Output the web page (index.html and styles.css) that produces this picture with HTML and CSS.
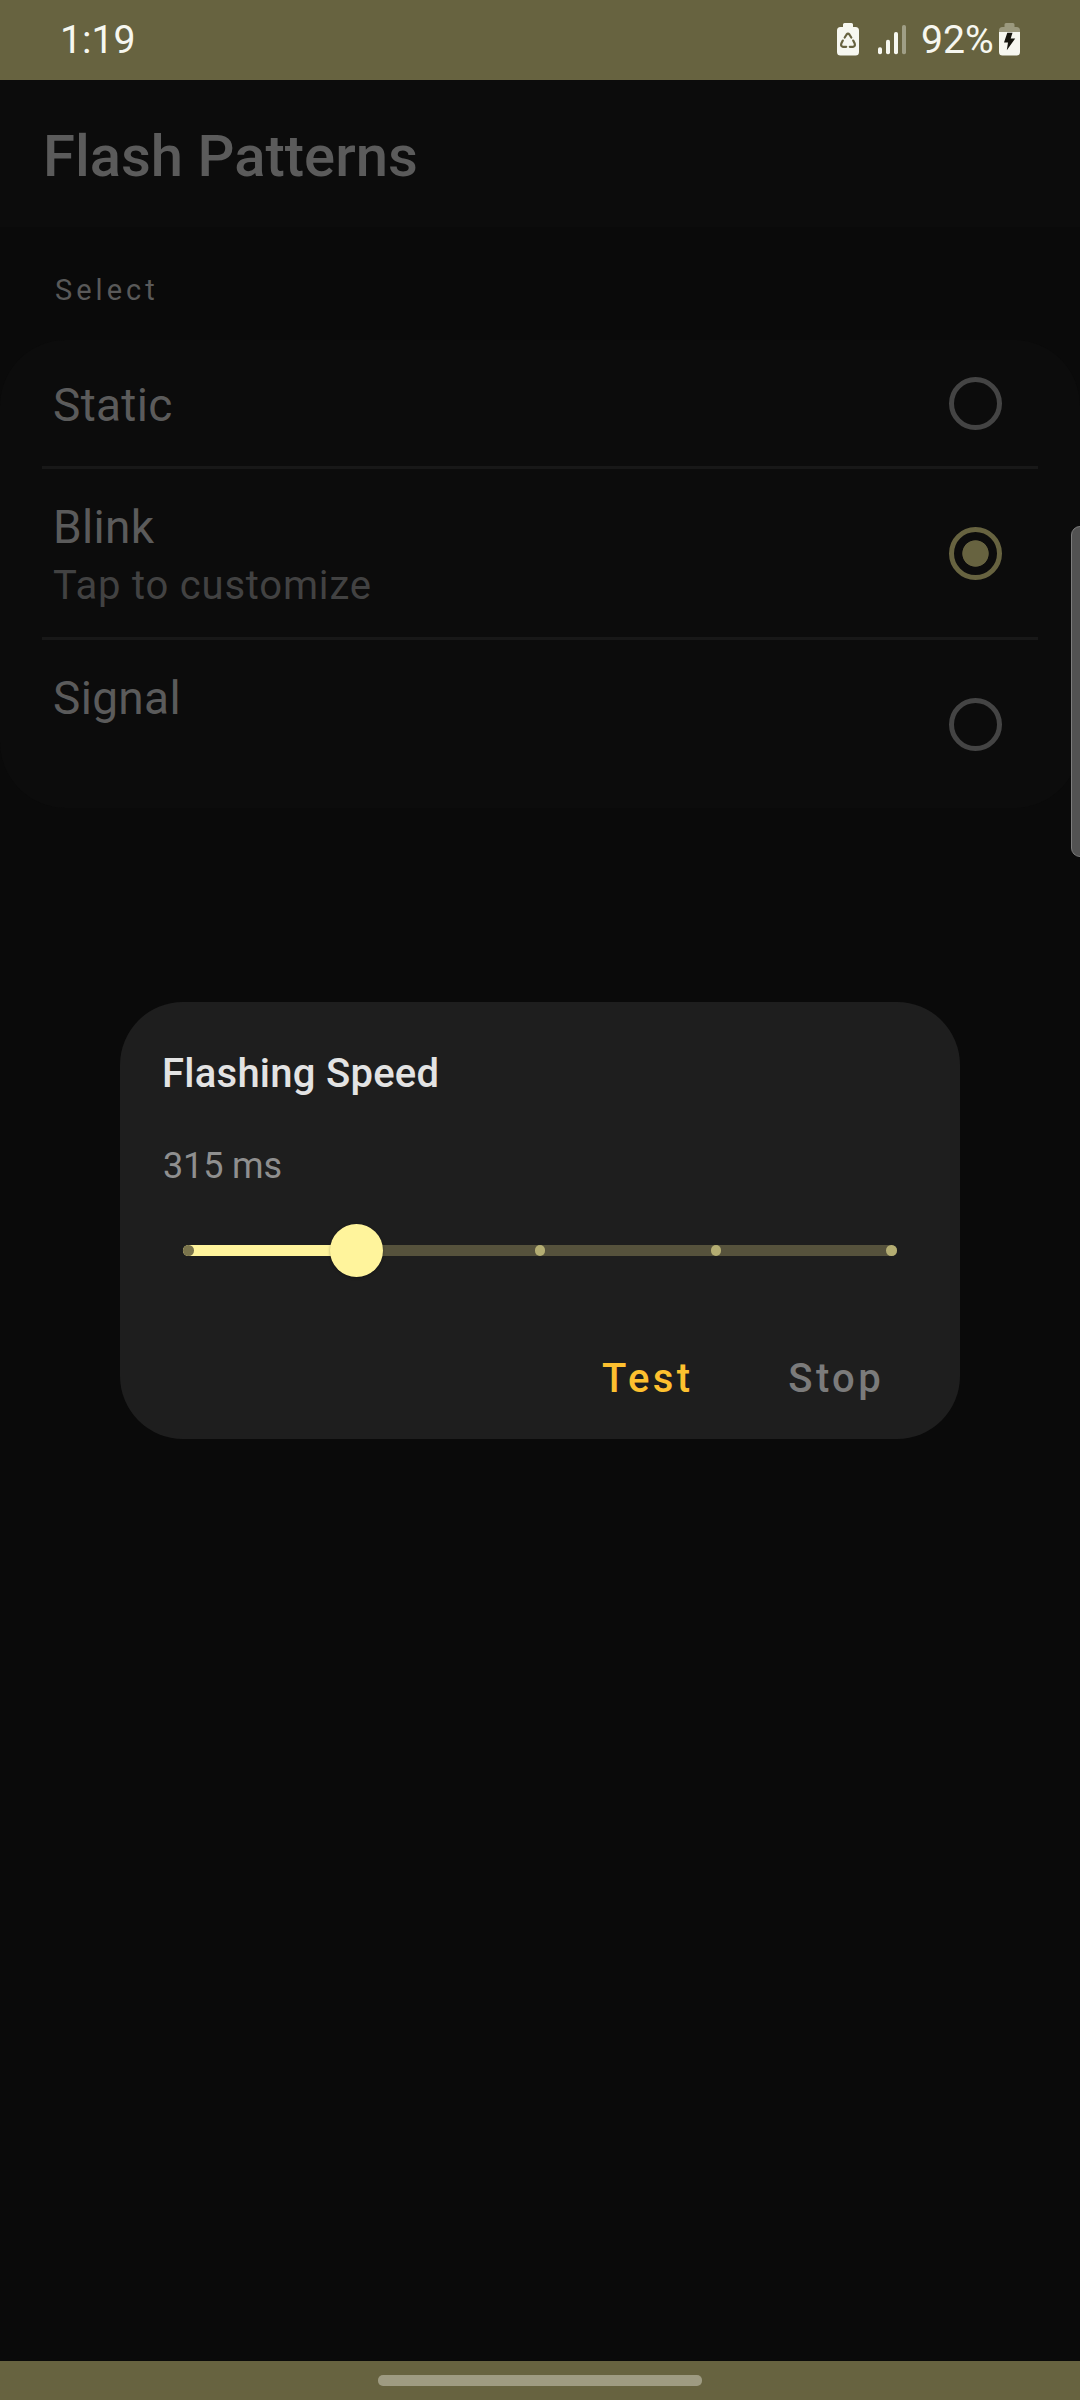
FILE: index.html
```html
<!DOCTYPE html>
<html lang="en">
<head>
<meta charset="utf-8">
<title>Flash Patterns</title>
<link rel="stylesheet" href="styles.css">
</head>
<body>
<div class="screen">
  <header class="status">
    <span class="clock">1:19</span>
    <div class="status-icons">
      <svg class="ic-recycle" width="22" height="33" viewBox="0 0 22 33">
        <path fill="#f6f7f0" d="M7.5 0h7a1.5 1.5 0 0 1 1.500 1.500V4h2.500A3.500 3.500 0 0 1 22 7.500v21.500a3.500 3.500 0 0 1-3.500 3.500h-15A3.500 3.500 0 0 1 0 29V7.500A3.500 3.500 0 0 1 3.500 4H6V1.500A1.500 1.500 0 0 1 7.500 0z"/>
        <g fill="none" stroke="#676340" stroke-width="2.2" stroke-linecap="round" stroke-linejoin="round">
          <path d="M7.700 14.500 9.600 11.500Q11 9.700 12.400 11.500L14.300 14.500"/>
          <path d="M16.200 17.600 17.700 20.600Q18.600 23.500 16 23.800H12.800"/>
          <path d="M9.200 23.800H6Q3.400 23.500 4.300 20.600L5.800 17.600"/>
        </g>
      </svg>
      <svg class="ic-signal" width="28" height="31" viewBox="0 0 28 31">
        <g fill="#f6f7f0">
          <rect x="0" y="22.300" width="4" height="7" rx="1.800"/>
          <rect x="8" y="14.700" width="4" height="14.600" rx="1.800"/>
          <rect x="16" y="7" width="4" height="22.300" rx="1.800"/>
          <rect x="24" y="0" width="4" height="29.300" rx="1.800" opacity=".4"/>
        </g>
      </svg>
      <span class="percent">92%</span>
      <svg class="ic-battery" width="21" height="33" viewBox="0 0 21 33">
        <path fill="#9b997e" d="M7 0h7a1.500 1.500 0 0 1 1.500 1.500V4h2A3.500 3.500 0 0 1 21 7.500V9H0V7.500A3.500 3.500 0 0 1 3.500 4h2V1.500A1.500 1.500 0 0 1 7 0z"/>
        <path fill="#f6f7f0" d="M0 9h21v20a3.500 3.500 0 0 1-3.500 3.500h-14A3.500 3.500 0 0 1 0 29z"/>
        <path fill="#16160f" d="M8.300 9.800H13.500L11.700 15.500H16.200L7.800 27.200 9 19.500H5z"/>
      </svg>
    </div>
  </header>

  <main class="content">
    <h1 class="title">Flash Patterns</h1>
    <h2 class="section">Select</h2>
    <div class="card">
      <div class="row row-single">
        <div class="label">Static</div>
        <span class="radio"></span>
      </div>
      <hr class="divider">
      <div class="row">
        <div>
          <div class="label">Blink</div>
          <div class="sub">Tap to customize</div>
        </div>
        <span class="radio radio-on"></span>
      </div>
      <hr class="divider">
      <div class="row">
        <div class="label">Signal</div>
        <span class="radio"></span>
      </div>
    </div>
  </main>

  <footer class="navbar"><span class="pill"></span></footer>

  <span class="edge-handle"></span>

  <section class="dialog">
    <h3 class="dialog-title">Flashing Speed</h3>
    <p class="value">315 ms</p>
    <div class="slider">
      <i class="tick tick-start"></i><i class="tick tick-hidden"></i><i class="tick"></i><i class="tick"></i><i class="tick"></i>
      <span class="fill"></span>
      <span class="thumb"></span>
    </div>
    <div class="actions">
      <span class="action test">Test</span>
      <span class="action stop">Stop</span>
    </div>
  </section>
</div>
</body>
</html>
```
FILE: styles.css
```css
* { box-sizing: border-box; margin: 0; padding: 0; }
body { background: #0a0a0a; font-family: Roboto, sans-serif; }
.screen { position: relative; width: 1080px; height: 2400px; display: flex; flex-direction: column; overflow: hidden; }

.status { height: 80px; padding: 0 60px; background: #676340; color: #f6f7f0; display: flex; justify-content: space-between; font-size: 39.2px; line-height: 80px; }
.status-icons { display: flex; align-items: flex-start; }
.ic-recycle { margin: 23px 19px 0 0; }
.ic-signal { margin: 25px 15px 0 0; }
.ic-battery { margin: 23px 0 0 5.2px; }

.content { flex: 1; }
.title { height: 147px; padding-left: 43px; background: #0c0c0c; color: #5b5b5b; font-size: 58px; font-weight: 500; line-height: 152px; }
.section { height: 113px; padding: 38px 0 0 55px; color: #595959; font-size: 29px; font-weight: 400; line-height: 50px; letter-spacing: 4px; }
.card { height: 468px; border-radius: 66px; background: #0c0c0c; }
.row { height: 168px; padding: 28px 78px 0 53px; display: flex; justify-content: space-between; }
.row-single { height: 126px; padding-top: 35px; }
.label { color: #5b5b5b; font-size: 46px; line-height: 60px; letter-spacing: .33px; }
.sub { margin-top: 2px; color: #424242; font-size: 40px; line-height: 54px; letter-spacing: .8px; }
.radio { width: 53px; height: 53px; margin-top: 30px; border: 5.5px solid #444; border-radius: 50%; }
.row-single .radio { margin-top: 2px; }
.radio-on { border-color: #676340; background: radial-gradient(circle, #676340 12.8px, transparent 13.6px); }
.divider { height: 3px; margin: 0 42px; border: 0; background: #181818; }

.navbar { height: 39px; padding-top: 14px; background: #676340; display: flex; justify-content: center; }
.pill { width: 324px; height: 11px; border-radius: 5px; background: #9e9b82; }

.edge-handle { position: absolute; left: 1071px; top: 526px; width: 18px; height: 331px; border: 1px solid #7c7c7c; border-radius: 12px; background: #525252; }

.dialog { position: absolute; left: 120px; top: 1002px; width: 840px; height: 437px; padding: 42px 58px 0 42px; border-radius: 63px; background: #1e1e1e; }
.dialog-title { color: #e3e3e3; font-size: 40px; font-weight: 500; line-height: 60px; letter-spacing: .25px; }
.value { margin: 34px 0 0 1px; color: #8f8f8f; font-size: 36px; line-height: 56px; letter-spacing: -.15px; }
.slider { position: relative; width: 714px; height: 11px; margin: 51px 0 0 21px; border-radius: 6px; background: #56523c; display: flex; justify-content: space-between; align-items: center; }
.tick { position: relative; z-index: 1; width: 10.6px; height: 10.6px; border-radius: 50%; background: #b4ad72; }
.tick-start { background: #7a744c; }
.tick-hidden { visibility: hidden; }
.fill { position: absolute; left: 0; top: 0; width: 174px; height: 11px; border-radius: 6px; background: #fff49c; }
.thumb { position: absolute; z-index: 2; left: 147px; top: -21px; width: 53px; height: 53px; border-radius: 50%; background: #fff49c; box-shadow: 0 1px 3px rgba(0,0,0,.3); }
.actions { margin: 93px 18px 0 0; display: flex; justify-content: flex-end; gap: 95px; }
.action { font-size: 40px; font-weight: 500; line-height: 60px; letter-spacing: 3.35px; }
.test { color: #fdc02f; }
.stop { color: #7b7b7b; }
```
